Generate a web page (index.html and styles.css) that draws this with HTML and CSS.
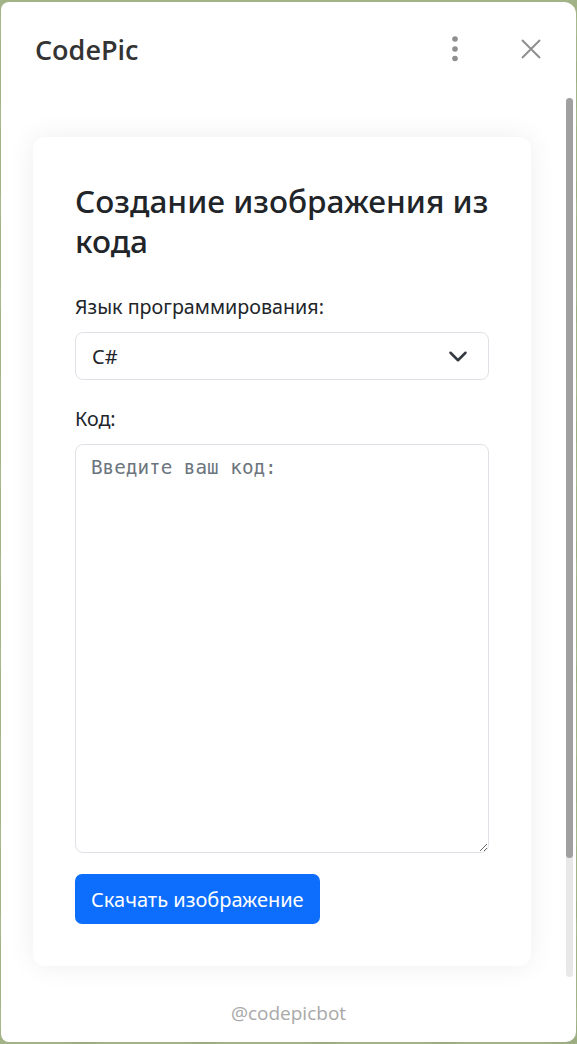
FILE: index.html
```html
<!DOCTYPE html>
<html lang="ru">
<head>
<meta charset="utf-8">
<title>CodePic</title>
<link rel="stylesheet" href="styles.css">
</head>
<body>
<div class="panel">
  <header class="topbar">
    <div class="brand">CodePic</div>
    <div class="actions">
      <svg class="icon-dots" width="12" height="28" viewBox="0 0 12 28" aria-hidden="true">
        <circle cx="6" cy="4" r="2.8"/>
        <circle cx="6" cy="14" r="2.8"/>
        <circle cx="6" cy="23.5" r="2.8"/>
      </svg>
      <svg class="icon-close" width="22" height="22" viewBox="0 0 22 22" aria-hidden="true">
        <path d="M2 2 L20 20 M20 2 L2 20"/>
      </svg>
    </div>
  </header>
  <div class="scroller">
    <main class="content">
      <section class="card">
        <h1 class="title">Создание изображения из кода</h1>
        <label class="label">Язык программирования:</label>
        <div class="select">
          <span>C#</span>
          <svg class="chev" width="20" height="15" viewBox="0 0 16 12" aria-hidden="true">
            <path d="M2 3 L8 9 L14 3"/>
          </svg>
        </div>
        <label class="label label-code">Код:</label>
        <textarea class="code" placeholder="Введите ваш код:"></textarea>
        <button class="btn">Скачать изображение</button>
      </section>
    </main>
    <div class="track"><div class="thumb"></div></div>
  </div>
  <footer class="footer">@codepicbot</footer>
</div>
</body>
</html>
```

FILE: styles.css
```css
* { box-sizing: border-box; }
html, body { margin: 0; height: 100%; }
body {
  background-color: #a2b487;
  background-image:
    radial-gradient(circle at 20% 30%, rgba(255,255,255,0.06) 0 20px, transparent 21px),
    radial-gradient(circle at 70% 60%, rgba(0,0,0,0.04) 0 16px, transparent 17px);
  background-size: 90px 90px, 120px 120px;
  padding: 2px 1px 2px 1px;
  font-family: "Noto Sans", "Open Sans", sans-serif;
  color: #212529;
}
.panel {
  height: 1040px;
  background: #ffffff;
  border-radius: 8px 12px 10px 8px;
  display: flex;
  flex-direction: column;
  overflow: hidden;
}
.topbar {
  height: 96px;
  display: flex;
  align-items: center;
  justify-content: space-between;
  padding: 0 34px 0 34px;
  flex: none;
}
.brand {
  font-family: "Open Sans", "Noto Sans", sans-serif;
  font-size: 27px;
  font-weight: 600;
  color: #333333;
  margin-top: -2px;
}
.actions {
  display: flex;
  align-items: center;
  gap: 59px;
}
.icon-dots { fill: #8f8f8f; margin-top: -2px; }
.icon-close { stroke: #8f8f8f; stroke-width: 2; fill: none; margin-top: -2px; }
.scroller {
  height: 879px;
  display: flex;
  flex: none;
}
.content {
  flex: 1;
  padding: 39px 35px 11px 32px;
  min-width: 0;
}
.card {
  height: 829px;
  background: #fff;
  border-radius: 12px;
  box-shadow: 0 0 28px rgba(0, 0, 0, 0.07);
  padding: 44px 42px 42px 42px;
  display: flex;
  flex-direction: column;
  align-items: flex-start;
}
.title {
  margin: 0 0 31px 0;
  font-size: 31.6px;
  line-height: 40px;
  font-weight: 500;
  color: #212529;
  width: 100%;
}
.label {
  display: block;
  font-size: 19.7px;
  line-height: 30px;
  margin-bottom: 10px;
  color: #212529;
}
.label-code { margin-top: 24px; }
.select {
  width: 100%;
  height: 48px;
  border: 1px solid #dee2e6;
  border-radius: 8px;
  padding: 0 20px 0 16px;
  display: flex;
  align-items: center;
  justify-content: space-between;
  font-size: 20px;
  color: #212529;
}
.chev { fill: none; stroke: #343a40; stroke-width: 2; stroke-linecap: round; stroke-linejoin: round; }
.code {
  width: 100%;
  height: 409px;
  border: 1px solid #dee2e6;
  border-radius: 8px;
  padding: 9px 15px;
  font-family: "DejaVu Sans Mono", "Liberation Mono", monospace;
  font-size: 19.3px;
  line-height: 28px;
  color: #212529;
  resize: vertical;
  outline: none;
  display: block;
}
.code::placeholder { color: #6c757d; }
.btn {
  margin-top: 21px;
  height: 50px;
  padding: 0 16px;
  background: #0d6efd;
  color: #fff;
  border: 0;
  border-radius: 7px;
  font-family: "Noto Sans", "Open Sans", sans-serif;
  font-size: 20px;
}
.track {
  width: 7px;
  margin-right: 3px;
  background: #e8e8e8;
  border-radius: 4px;
  flex: none;
}
.thumb {
  height: 760px;
  background: #a0a0a0;
  border-radius: 4px;
}
.footer {
  flex: 1;
  display: flex;
  align-items: center;
  justify-content: center;
  padding-top: 6px;
  font-family: "Open Sans", "Noto Sans", sans-serif;
  font-size: 19px;
  color: #a8a8a8;
}
```
